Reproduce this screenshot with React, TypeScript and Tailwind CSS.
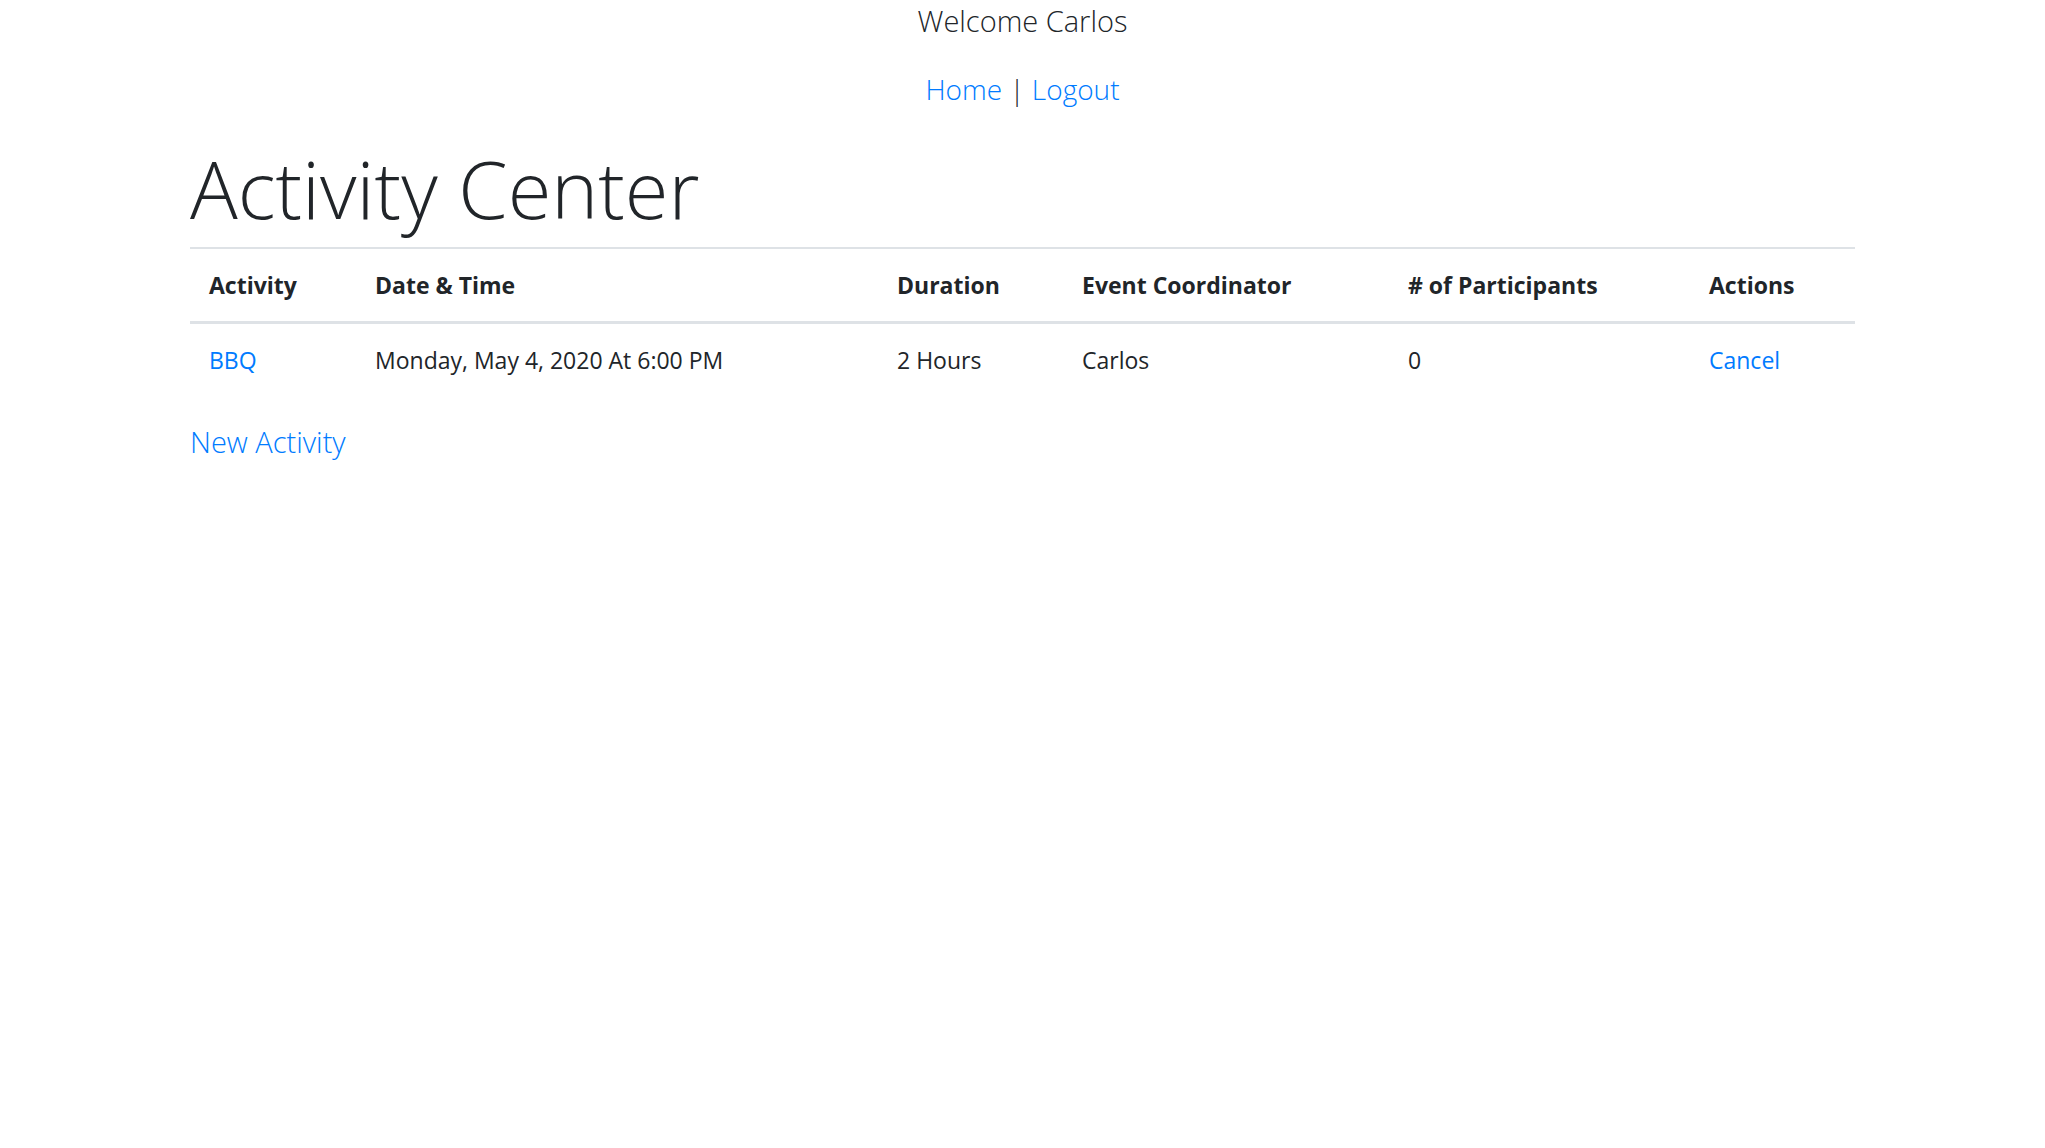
import React from 'react';

const activities = [
  {
    name: 'BBQ',
    date: 'Monday, May 4, 2020 At 6:00 PM',
    duration: '2 Hours',
    coordinator: 'Carlos',
    participants: 0,
  },
];

const th = 'px-[19px] py-5 text-left font-bold border-b-[3px] border-[#dee2e6]';
const td = 'px-[19px] py-5';

export default function App() {
  return (
    <div className="min-h-screen bg-white text-[#212529] font-['Open_Sans','Noto_Sans',sans-serif]">
      <div className="pt-[2px] text-center">
        <div className="text-[29px] leading-[37px] font-light">Welcome Carlos</div>
        <div className="mt-[32px] text-[28px] leading-[37px] font-light">
          <a href="#" className="text-[#007bff]">Home</a> | <a href="#" className="text-[#007bff]">Logout</a>
        </div>
      </div>

      <div className="mx-auto w-[1665px]">
        <h1 className="mt-[32px] text-[79.5px] leading-[97px] font-light">Activity Center</h1>

        <table className="mt-[10px] w-full table-fixed border-collapse text-[23px] leading-[32px]">
          <thead>
            <tr className="border-t-2 border-[#dee2e6]">
              <th className={`w-[166px] ${th}`}>Activity</th>
              <th className={`w-[522px] ${th}`}>Date &amp; Time</th>
              <th className={`w-[185px] ${th}`}>Duration</th>
              <th className={`w-[326px] ${th}`}>Event Coordinator</th>
              <th className={`w-[301px] ${th}`}># of Participants</th>
              <th className={th}>Actions</th>
            </tr>
          </thead>
          <tbody>
            {activities.map((a) => (
              <tr key={a.name}>
                <td className={td}>
                  <a href="#" className="text-[#007bff]">{a.name}</a>
                </td>
                <td className={td}>{a.date}</td>
                <td className={td}>{a.duration}</td>
                <td className={td}>{a.coordinator}</td>
                <td className={td}>{a.participants}</td>
                <td className={td}>
                  <a href="#" className="text-[#007bff]">Cancel</a>
                </td>
              </tr>
            ))}
          </tbody>
        </table>

        <div className="mt-[26px] text-[29px] leading-[39px] font-light">
          <a href="#" className="text-[#007bff]">New Activity</a>
        </div>
      </div>
    </div>
  );
}
